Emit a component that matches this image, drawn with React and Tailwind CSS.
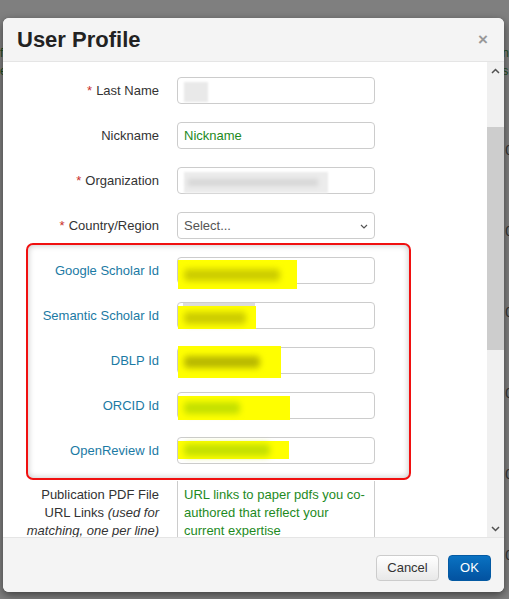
import React from 'react';

const font = { fontFamily: '"Liberation Sans", Arial, sans-serif' };

function Req() {
  return <span className="mr-1 text-[#c9302c]">*</span>;
}

function Row({ label, children, labelW = 'w-[156px]', labelClass = 'text-[#333]' }) {
  return (
    <div className="flex h-[27px] items-center">
      <div className={`${labelW} shrink-0 text-right text-[13px] ${labelClass}`}>{label}</div>
      <div className="relative ml-[18px] h-[27px] w-[198px]">{children}</div>
    </div>
  );
}

function Box({ children }) {
  return (
    <div className="relative h-full w-full rounded-[4px] border border-[#ccc] bg-white">{children}</div>
  );
}

function Highlight({ top, width, height, blur, blurW }) {
  return (
    <div
      className="absolute left-[1px] bg-[#ffff00]"
      style={{ top, width, height }}
    >
      <div
        className={`absolute left-[6px] top-1/2 h-[12px] -translate-y-1/2 rounded-sm blur-[3px] ${blur}`}
        style={{ width: blurW }}
      />
    </div>
  );
}

export default function App() {
  return (
    <div className="relative h-[599px] w-[509px] overflow-hidden bg-[#7f7f7f]" style={font}>
      {/* faint page behind overlay */}
      <div className="absolute left-0 top-[44px] text-[12px] leading-[18px] text-[#1f4d1f]">f<br />e</div>
      <div className="absolute right-0 top-[44px] text-[12px] leading-[18px] text-[#1f4d1f]">n<br />s</div>
      <div className="absolute right-[-4px] top-[140px] flex flex-col gap-[60px] text-[14px] text-[#333]">
        <span>0</span><span>0</span><span>0</span><span>0</span><span>0</span><span>0</span><span>0</span>
      </div>

      <div className="pl-[3px] pt-[18px]">
        <div className="relative flex h-[574px] w-[501px] flex-col overflow-hidden rounded-[6px] bg-white shadow-[0_3px_9px_rgba(0,0,0,0.5)]">
          {/* header */}
          <div className="flex h-[44px] shrink-0 items-center justify-between border-b border-[#e5e5e5] bg-[#f4f4f4] pl-[14px] pr-[16px]">
            <h3 className="text-[22px] font-bold text-[#222]">User Profile</h3>
            <span className="text-[17px] font-bold leading-none text-[#999]">×</span>
          </div>

          {/* body */}
          <div className="flex h-[475px] shrink-0">
            <div className="flex-1 overflow-hidden pt-[15px]">
              <div className="flex flex-col gap-[18px]">
                <Row label={<><Req />Last Name</>}>
                  <Box>
                    <div className="absolute left-[6px] top-[4px] h-[20px] w-[24px] bg-[#e9e9e9] blur-[1px]" />
                  </Box>
                </Row>
                <Row label="Nickname">
                  <Box>
                    <span className="absolute left-[6px] top-1/2 -translate-y-1/2 text-[13px] text-[#1e8a1e]">Nickname</span>
                  </Box>
                </Row>
                <Row label={<><Req />Organization</>}>
                  <Box>
                    <div className="absolute left-[6px] top-[4px] h-[21px] w-[144px] bg-[#ececec] blur-[1px]">
                      <div className="ml-[4px] mt-[7px] h-[7px] w-[130px] bg-[#d6d6d6] blur-[2px]" />
                    </div>
                  </Box>
                </Row>
                <Row label={<><Req />Country/Region</>}>
                  <Box>
                    <span className="absolute left-[6px] top-1/2 -translate-y-1/2 text-[13px] text-[#555]">Select...</span>
                    <svg className="absolute right-[6px] top-[11px]" width="8" height="5" viewBox="0 0 8 5">
                      <path d="M1 1l3 3 3-3" fill="none" stroke="#555" strokeWidth="1.2" />
                    </svg>
                  </Box>
                </Row>
              </div>

              {/* highlighted box */}
              <div className="ml-[23px] mt-[4px] flex w-[385px] flex-col gap-[18px] rounded-[7px] border-2 border-[#f01010] pb-[14px] pt-[12px] shadow-[inset_0_0_6px_rgba(0,0,0,0.25)]">
                <Row label="Google Scholar Id" labelW="w-[131px]" labelClass="text-[#1b7aa4]">
                  <Box />
                  <Highlight top={3} width={119} height={29} blur="bg-[#cccc00]" blurW={96} />
                </Row>
                <Row label="Semantic Scholar Id" labelW="w-[131px]" labelClass="text-[#1b7aa4]">
                  <Box>
                    <div className="absolute left-[5px] top-0 h-[4px] w-[72px] bg-[#dcdcdc]" />
                  </Box>
                  <Highlight top={4} width={78} height={23} blur="bg-[#cccc00]" blurW={62} />
                </Row>
                <Row label="DBLP Id" labelW="w-[131px]" labelClass="text-[#1b7aa4]">
                  <Box />
                  <Highlight top={-1} width={103} height={32} blur="bg-[#b8b800]" blurW={76} />
                </Row>
                <Row label="ORCID Id" labelW="w-[131px]" labelClass="text-[#1b7aa4]">
                  <Box />
                  <Highlight top={4} width={112} height={24} blur="bg-[#c4e000]" blurW={56} />
                </Row>
                <Row label="OpenReview Id" labelW="w-[131px]" labelClass="text-[#1b7aa4]">
                  <Box />
                  <Highlight top={4} width={111} height={18} blur="bg-[#c4e000]" blurW={86} />
                </Row>
              </div>

              {/* publication links */}
              <div className="mt-px flex">
                <div className="w-[156px] shrink-0 pt-[5px] text-right text-[13px] leading-[18px] text-[#333]">
                  Publication PDF File
                  <br />
                  URL Links <i>(used for</i>
                  <br />
                  <i>matching, one per line)</i>
                </div>
                <div className="ml-[18px] h-[80px] w-[198px] border border-t-0 border-[#ccc] bg-white pl-[6px] pr-[4px] pt-[5px] text-[13px] leading-[18px] text-[#1e8a1e]">
                  URL links to paper pdfs you co-authored that reflect your current expertise
                </div>
              </div>
            </div>

            {/* scrollbar */}
            <div className="flex w-[17px] shrink-0 flex-col bg-[#f0f0f0]">
              <div className="flex h-[17px] items-center justify-center">
                <svg width="9" height="6" viewBox="0 0 9 6">
                  <path d="M1 5l3.5-3.5L8 5" fill="none" stroke="#505050" strokeWidth="1.5" />
                </svg>
              </div>
              <div className="mt-[48px] h-[223px] w-full bg-[#cdcdcd]" />
              <div className="flex-1" />
              <div className="flex h-[17px] items-center justify-center">
                <svg width="9" height="6" viewBox="0 0 9 6">
                  <path d="M1 1l3.5 3.5L8 1" fill="none" stroke="#505050" strokeWidth="1.5" />
                </svg>
              </div>
            </div>
          </div>

          {/* footer */}
          <div className="flex flex-1 items-start justify-end gap-[9px] border-t border-[#e5e5e5] bg-[#f4f4f4] pr-[13px] pt-[17px]">
            <button className="h-[26px] w-[63px] rounded-[4px] border border-[#ccc] bg-gradient-to-b from-white to-[#e8e8e8] text-[13px] text-[#333]">
              Cancel
            </button>
            <button className="h-[26px] w-[43px] rounded-[4px] border border-[#045aa3] bg-gradient-to-b from-[#0a72c2] to-[#0352a0] text-[13px] text-white">
              OK
            </button>
          </div>
        </div>
      </div>
    </div>
  );
}
